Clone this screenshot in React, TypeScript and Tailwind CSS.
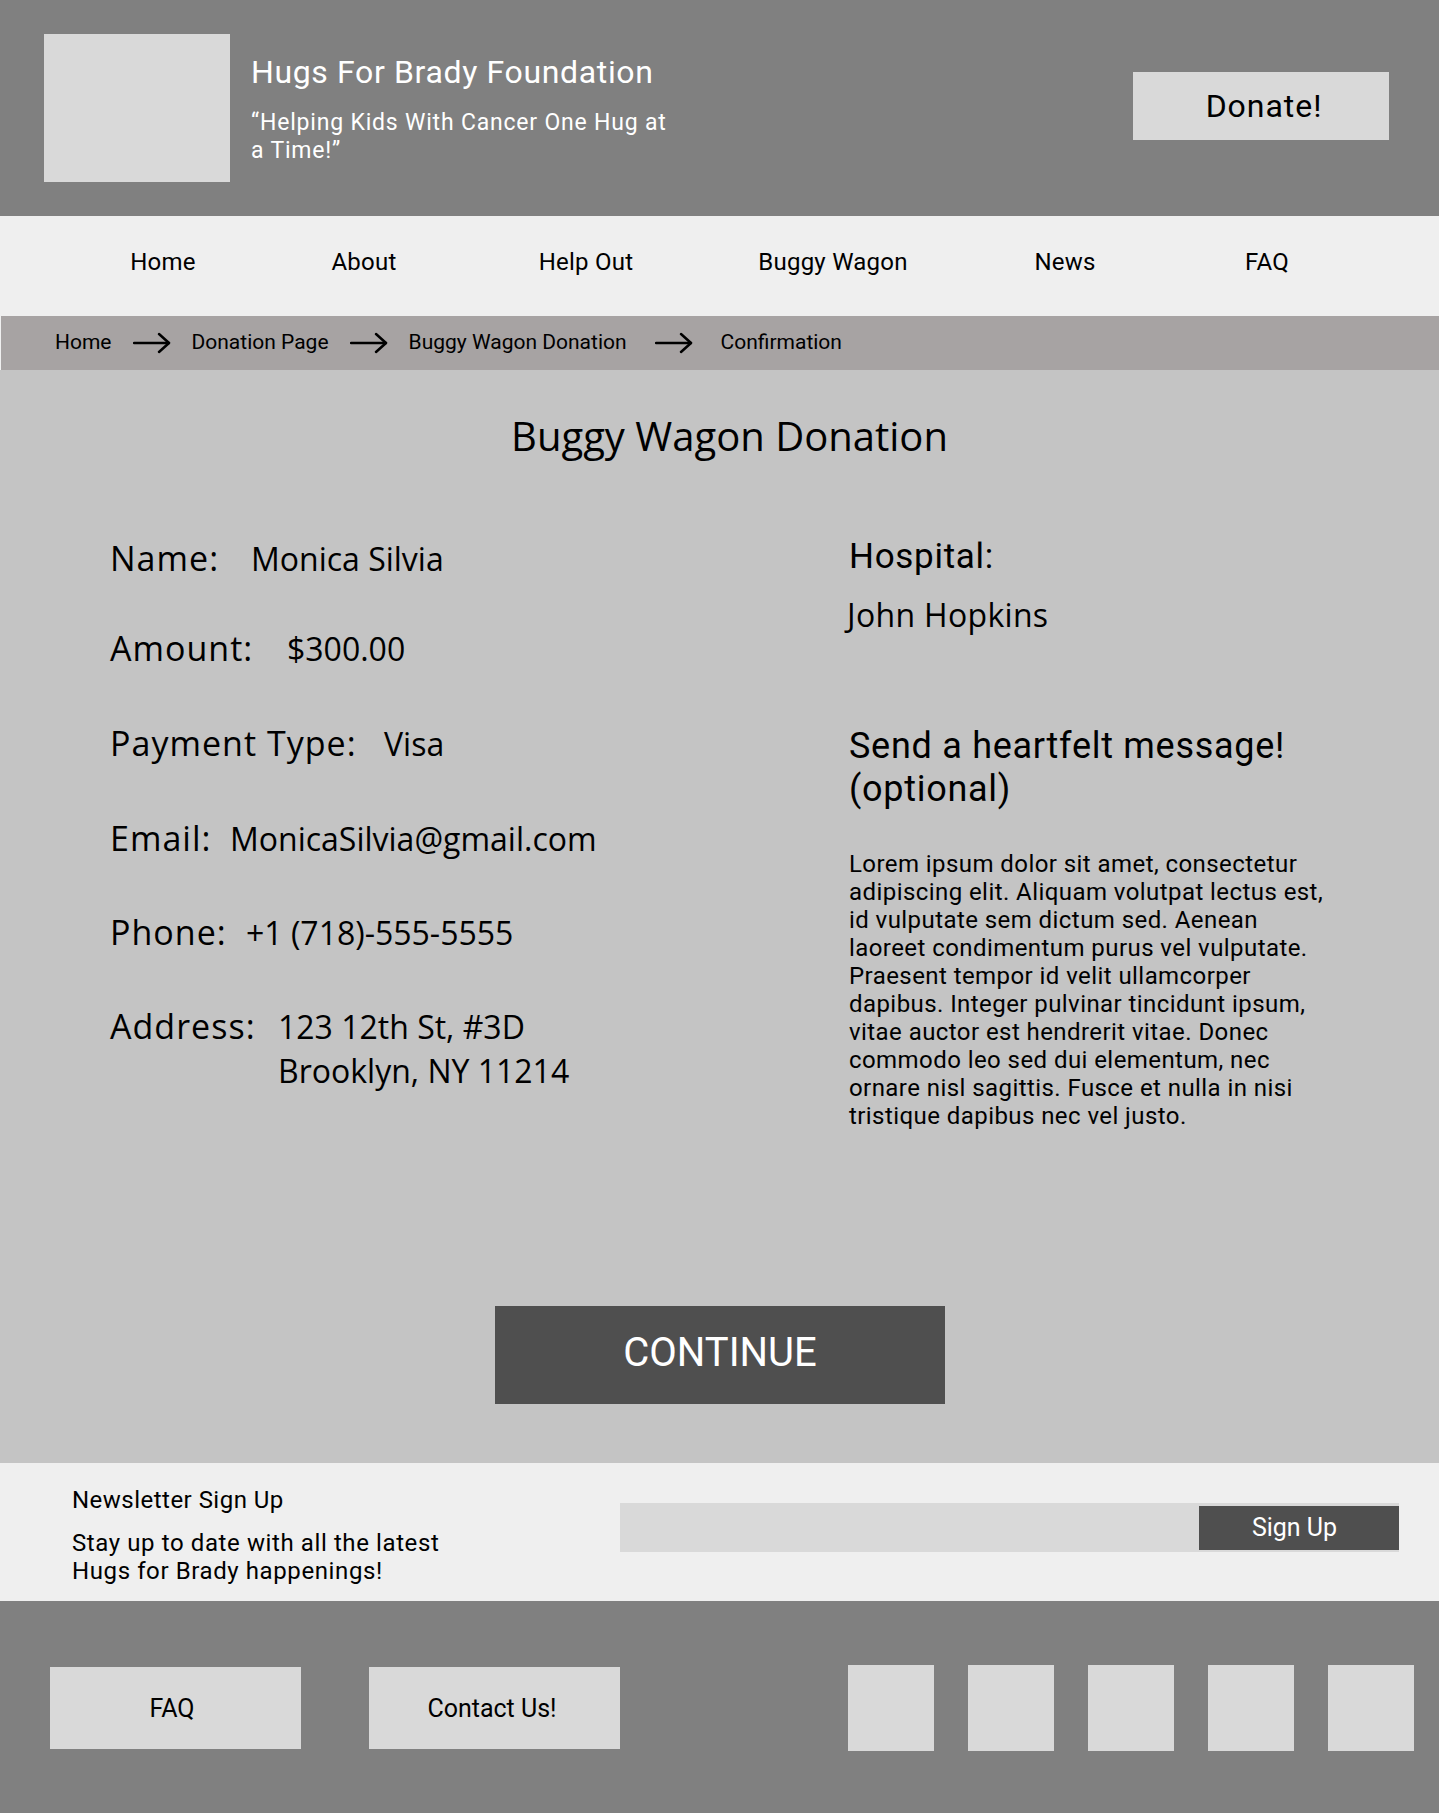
import React from 'react';

const rubik = "font-['Roboto','Liberation_Sans',sans-serif]";
const open = "font-['Open_Sans','Noto_Sans',sans-serif]";

const Arrow = ({ className = '' }: { className?: string }) => (
  <svg className={className} width="38" height="22" viewBox="0 0 38 22" fill="none" stroke="#000" strokeWidth="2.5" strokeLinecap="round" strokeLinejoin="round">
    <path d="M1 11 H36" />
    <path d="M26 2 L36 11 L26 20" />
  </svg>
);

// each cell is 200px wide, centred where the reference puts the link
const navItems = [
  { label: 'Home', ml: 'ml-0' },
  { label: 'About', ml: 'ml-[1px]' },
  { label: 'Help Out', ml: 'ml-[22px]' },
  { label: 'Buggy Wagon', ml: 'ml-[47px]' },
  { label: 'News', ml: 'ml-[32px]' },
  { label: 'FAQ', ml: 'ml-[2px]' },
];

const crumbs = ['Home', 'Donation Page', 'Buggy Wagon Donation', 'Confirmation'];

// label width decides where each value starts
const rows = [
  { label: 'Name:', value: 'Monica Silvia', w: 'w-[141px]', mt: 'mt-0' },
  { label: 'Amount:', value: '$300.00', w: 'w-[177px]', mt: 'mt-[45px]' },
  { label: 'Payment Type:', value: 'Visa', w: 'w-[274px]', mt: 'mt-[50px]' },
  { label: 'Email:', value: 'MonicaSilvia@gmail.com', w: 'w-[120px]', mt: 'mt-[50px]' },
  { label: 'Phone:', value: '+1 (718)-555-5555', w: 'w-[136px]', mt: 'mt-[49px]' },
];

const lorem = [
  'Lorem ipsum dolor sit amet, consectetur',
  'adipiscing elit. Aliquam volutpat lectus est,',
  'id vulputate sem dictum sed. Aenean',
  'laoreet condimentum purus vel vulputate.',
  'Praesent tempor id velit ullamcorper',
  'dapibus. Integer pulvinar tincidunt ipsum,',
  'vitae auctor est hendrerit vitae. Donec',
  'commodo leo sed dui elementum, nec',
  'ornare nisl sagittis. Fusce et nulla in nisi',
  'tristique dapibus nec vel justo.',
];

const App = () => {
  return (
    <div className={`w-[1439px] min-h-[1813px] bg-[#808080] ${rubik}`}>
      {/* Header */}
      <header className="h-[216px] bg-[#808080] flex items-start pl-[44px] pr-[50px]">
        <div className="mt-[34px] w-[186px] h-[148px] bg-[#d9d9d9] shrink-0" />
        <div className="ml-[21px] mt-[54px] text-white">
          <h1 className="text-[32px] leading-[36px] tracking-[0.02em]">Hugs For Brady Foundation</h1>
          <p className="mt-[19px] text-[23px] leading-[28px] tracking-[0.035em] whitespace-nowrap">
            “Helping Kids With Cancer One Hug at
            <br />
            a Time!”
          </p>
        </div>
        <button className="ml-auto mt-[72px] w-[256px] h-[68px] pl-[6px] bg-[#d9d9d9] text-black text-[32px] tracking-[0.03em]">
          Donate!
        </button>
      </header>

      {/* Nav */}
      <nav className="h-[100px] pb-[9px] bg-[#efefef] flex items-center pl-[63px]">
        {navItems.map((item) => (
          <a key={item.label} className={`${item.ml} w-[200px] text-center text-[24px] tracking-[0.01em] text-black`}>
            {item.label}
          </a>
        ))}
      </nav>

      {/* Breadcrumb */}
      <div className="h-[54px] bg-[#efefef] pl-px">
        <div className="h-full bg-[#a7a3a3] flex items-center pl-[54px] gap-[21px]">
          {crumbs.map((c, i) => (
            <React.Fragment key={c}>
              {i > 0 && <Arrow className={i === 3 ? 'ml-[7px]' : ''} />}
              <span className={`text-[21px] text-black ${i === 3 ? 'ml-[7px]' : ''}`}>{c}</span>
            </React.Fragment>
          ))}
        </div>
      </div>

      {/* Main */}
      <main className="bg-[#c4c4c4] pt-[40px] pb-[59px] flex flex-col">
        <h2 className={`${open} text-center text-[40px] leading-[52px] text-black pl-[20px]`}>Buggy Wagon Donation</h2>

        <div className="mt-[74px] flex">
          <div className={`${open} w-[849px] pl-[110px] text-black`}>
            {rows.map((r) => (
              <div key={r.label} className={`flex items-baseline ${r.mt}`}>
                <span className={`${r.w} text-[34px] leading-[44px] tracking-[0.03em]`}>{r.label}</span>
                <span className="text-[32px] leading-[44px]">{r.value}</span>
              </div>
            ))}
            <div className="flex items-baseline mt-[49px]">
              <span className="w-[168px] text-[34px] leading-[44px] tracking-[0.03em]">Address:</span>
              <span className="text-[32px] leading-[44px]">
                123 12th St, #3D
                <br />
                Brooklyn, NY 11214
              </span>
            </div>
          </div>

          <div className="mt-[1px] text-black">
            <h3 className="text-[35px] leading-[40px] tracking-[0.02em]">Hospital:</h3>
            <p className={`${open} mt-[18px] -ml-[2px] text-[32px] leading-[40px] tracking-[0.01em]`}>John Hopkins</p>
            <h3 className="mt-[90px] text-[36px] leading-[43px] tracking-[0.02em]">
              Send a heartfelt message!
              <br />
              (optional)
            </h3>
            <p className="mt-[39px] text-[24px] leading-[28px] tracking-[0.018em]">
              {lorem.map((l) => (
                <span key={l} className="block whitespace-nowrap">{l}</span>
              ))}
            </p>
          </div>
        </div>

        <button className="mt-[176px] self-center ml-[1px] w-[450px] h-[98px] pb-[5px] bg-[#4f4f4f] text-white text-[40px]">
          CONTINUE
        </button>
      </main>

      {/* Newsletter */}
      <section className="h-[138px] bg-[#efefef] flex items-start pl-[72px] pr-[40px]">
        <div className="mt-[23px] text-black">
          <h4 className="text-[24px] leading-[28px] tracking-[0.02em]">Newsletter Sign Up</h4>
          <p className="mt-[15px] text-[24px] leading-[28px] tracking-[0.025em]">
            Stay up to date with all the latest
            <br />
            Hugs for Brady happenings!
          </p>
        </div>
        <div className="ml-auto mt-[40px] w-[779px] h-[49px] bg-[#d9d9d9] flex items-center justify-end">
          <button className="w-[200px] h-[44px] pr-[9px] bg-[#4f4f4f] text-white text-[25px]">Sign Up</button>
        </div>
      </section>

      {/* Footer */}
      <footer className="h-[213px] bg-[#808080] flex items-center pl-[50px] pr-[25px]">
        <div className="flex gap-[68px]">
          <button className="w-[251px] h-[82px] pt-[3px] pr-[7px] bg-[#d9d9d9] text-black text-[25px]">FAQ</button>
          <button className="w-[251px] h-[82px] pt-[3px] pr-[5px] bg-[#d9d9d9] text-black text-[25px]">Contact Us!</button>
        </div>
        <div className="ml-auto flex gap-[34px]">
          {[0, 1, 2, 3, 4].map((i) => (
            <div key={i} className="w-[86px] h-[86px] bg-[#d9d9d9]" />
          ))}
        </div>
      </footer>
    </div>
  );
};

export default App;
